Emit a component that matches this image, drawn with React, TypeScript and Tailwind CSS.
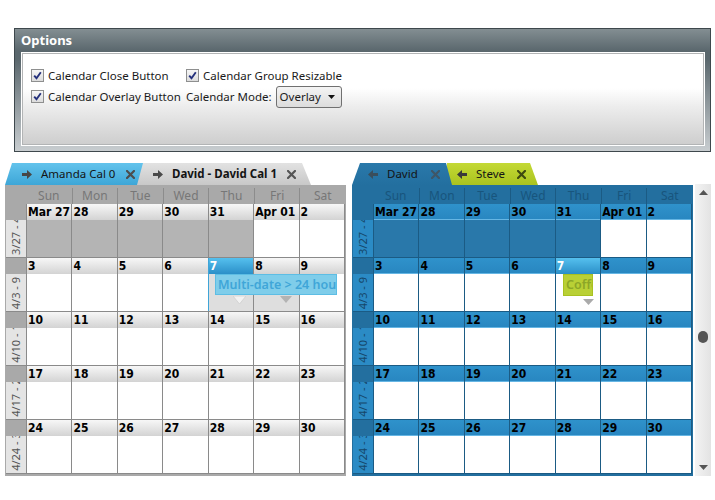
import React from "react";

type Theme = "gray" | "blue";

const DAY_NAMES = ["Sun", "Mon", "Tue", "Wed", "Thu", "Fri", "Sat"];

const WEEKS = [
  { label: "3/27 - 4/2", days: ["Mar 27", "28", "29", "30", "31", "Apr 01", "2"] },
  { label: "4/3 - 9", days: ["3", "4", "5", "6", "7", "8", "9"] },
  { label: "4/10 - 16", days: ["10", "11", "12", "13", "14", "15", "16"] },
  { label: "4/17 - 23", days: ["17", "18", "19", "20", "21", "22", "23"] },
  { label: "4/24 - 30", days: ["24", "25", "26", "27", "28", "29", "30"] },
];

const THEMES = {
  gray: {
    body: "bg-[#a9a9a9]",
    dayName: "text-[#777777] border-[#8c8c8c]",
    line: "border-[#8a8a8a]",
    dateRow: "bg-[linear-gradient(to_bottom,#f7f7f7,#d3d3d3)]",
    past: "bg-[#b4b4b4]",
    labelCell: "bg-[#e4e4e4] text-[#555555]",
  },
  blue: {
    body: "bg-[#236f9f]",
    dayName: "text-[#18557d] border-[#1b5b84]",
    line: "border-[#1b5b84]",
    dateRow: "bg-[linear-gradient(to_bottom,#2f92cb,#2886c0)] shadow-[inset_0_-1px_0_#66b6e4]",
    past: "bg-[#2978aa]",
    labelCell: "bg-[#2b8bc5] text-[#16476a]",
  },
};

const FONT = { fontFamily: '"Noto Sans", "Open Sans", sans-serif' };
const BOLD_FONT = { fontFamily: '"DejaVu Sans Condensed", "Liberation Sans", sans-serif' };

function Arrow({ dir, color }: { dir: "left" | "right"; color: string }) {
  return (
    <svg width="10" height="9" viewBox="0 0 10 9" className={dir === "left" ? "rotate-180" : ""}>
      <polygon points="0,3 5,3 5,0 10,4.5 5,9 5,6 0,6" fill={color} />
    </svg>
  );
}

function Close({ color }: { color: string }) {
  return (
    <svg width="9" height="9" viewBox="0 0 9 9">
      <path d="M1 1 L8 8 M8 1 L1 8" stroke={color} strokeWidth="2.2" strokeLinecap="square" />
    </svg>
  );
}

function Check() {
  return (
    <span className="flex h-[13px] w-[13px] items-center justify-center border border-[#8e8f8f] bg-[linear-gradient(to_bottom,#f6f6f6,#dcdcdc)]">
      <svg width="9" height="9" viewBox="0 0 9 9">
        <path d="M1.2 4.6 L3.5 7.2 L7.8 1.2" stroke="#24307c" strokeWidth="1.9" fill="none" />
      </svg>
    </span>
  );
}

function OptionsPanel() {
  return (
    <div className="ml-[14px] mt-[28px] flex h-[124px] w-[697px] flex-col border border-[#3e484d] bg-[linear-gradient(to_bottom,#838e92_0px,#5a676d_22px,#5a676d_30px,#c8cdd0_100%)]">
      <div className="h-[24px] pl-[6px] text-[13px] font-bold leading-[22px] text-white" style={FONT}>
        Options
      </div>
      <div
        className="mb-[6px] ml-[7px] mr-[6px] flex-1 border border-[#b2b4b5] bg-[linear-gradient(to_bottom,#ffffff_0%,#ffffff_38%,#ededed_58%,#cecece_100%)] pl-[8px] pt-[11px] text-[11.5px] text-[#1a1a1a] shadow-[0_0_0_1px_#ffffff]"
        style={FONT}
      >
        <div className="grid grid-cols-[155px_auto] grid-rows-[21px_21px] items-center">
          <label className="flex items-center gap-[4px]">
            <Check />
            Calendar Close Button
          </label>
          <label className="flex items-center gap-[4px]">
            <Check />
            Calendar Group Resizable
          </label>
          <label className="flex items-center gap-[4px]">
            <Check />
            Calendar Overlay Button
          </label>
          <div className="flex items-center gap-[4px]">
            <span>Calendar Mode:</span>
            <div className="flex h-[22px] w-[66px] items-center justify-between rounded-[3px] border border-[#707070] bg-[linear-gradient(to_bottom,#f4f4f4,#dcdcdc)] pl-[3px] pr-[6px]">
              <span>Overlay</span>
              <svg width="7" height="4" viewBox="0 0 7 4">
                <polygon points="0,0 7,0 3.5,4" fill="#111" />
              </svg>
            </div>
          </div>
        </div>
      </div>
    </div>
  );
}

function Tab({
  label,
  bold,
  className,
  arrow,
  arrowColor,
  closeColor,
  gapClass,
}: {
  label: string;
  bold?: boolean;
  className: string;
  arrow: "left" | "right";
  arrowColor: string;
  closeColor: string;
  gapClass: string;
}) {
  return (
    <div className={`relative flex h-[22px] items-center text-[11.5px] text-[#141414] ${className}`} style={FONT}>
      <Arrow dir={arrow} color={arrowColor} />
      <span className={`ml-[9px] ${bold ? "font-bold" : ""}`}>{label}</span>
      <span className={gapClass}>
        <Close color={closeColor} />
      </span>
    </div>
  );
}

function Calendar({ theme }: { theme: Theme }) {
  const t = THEMES[theme];
  const gray = theme === "gray";
  return (
    <div className="flex w-[341px] flex-col">
      {gray ? (
        <div className="flex h-[22px]">
          <Tab
            label="Amanda Cal 0"
            className="z-0 w-[140px] bg-[linear-gradient(to_bottom,#63c3ec,#3da6d7)] pl-[17px] [clip-path:polygon(7px_0,100%_0,100%_100%,0_100%)]"
            arrow="right"
            arrowColor="#474747"
            closeColor="#4d4d4d"
            gapClass="ml-[11px]"
          />
          <Tab
            label="David - David Cal 1"
            bold
            className="z-10 -ml-[8px] w-[174px] bg-[linear-gradient(to_bottom,#e2e2e2,#c8c8c8)] pl-[16px] [clip-path:polygon(6px_0,calc(100%-9px)_0,100%_100%,0_100%)]"
            arrow="right"
            arrowColor="#4a4a4a"
            closeColor="#555555"
            gapClass="ml-[10px]"
          />
        </div>
      ) : (
        <div className="flex h-[22px]">
          <Tab
            label="David"
            className="z-10 w-[100px] bg-[linear-gradient(to_bottom,#2a79aa,#236f9f)] pl-[16px] [clip-path:polygon(8px_0,calc(100%-6px)_0,100%_100%,0_100%)]"
            arrow="left"
            arrowColor="#3a4e5c"
            closeColor="#3f5666"
            gapClass="ml-[13px]"
          />
          <Tab
            label="Steve"
            className="z-0 -ml-[7px] w-[93px] bg-[linear-gradient(to_bottom,#c4d935,#aac31f)] pl-[12px] [clip-path:polygon(2px_0,calc(100%-8px)_0,100%_100%,0_100%)]"
            arrow="left"
            arrowColor="#3a3a3a"
            closeColor="#3f4a10"
            gapClass="ml-[12px]"
          />
        </div>
      )}

      <div className={`px-[1px] pb-[2px] pt-[2px] ${t.body}`}>
        <div className="ml-[20px] grid h-[17px] w-[319px] grid-cols-7 text-[12px] leading-[16px]" style={FONT}>
          {DAY_NAMES.map((d, i) => (
            <div key={d} className={`my-[1px] text-center ${t.dayName} ${i > 0 ? "border-l" : ""}`}>
              {d}
            </div>
          ))}
        </div>

        {WEEKS.map((w, wi) => (
          <div key={w.label} className={`flex h-[54px] border-b ${t.line}`}>
            <div className="flex w-[20px] flex-col">
              <div className="h-[16px]" />
              <div className={`flex flex-1 flex-col items-center justify-end overflow-hidden ${t.labelCell}`}>
                <span className="shrink-0 rotate-180 whitespace-nowrap pt-[2px] text-[11px] leading-[16px] [writing-mode:vertical-rl]" style={FONT}>
                  {w.label}
                </span>
              </div>
            </div>
            <div className={`relative grid w-[319px] grid-cols-7 border-r ${t.line}`}>
              {w.days.map((d, di) => {
                const today = wi === 1 && di === 4;
                const past = wi === 0 && di < 5;
                const shaded = gray && wi === 1 && (di === 4 || di === 5);
                const blueLine = gray && today;
                return (
                  <div key={d} className={`flex flex-col border-l ${blueLine ? "border-[#3fa4d7]" : t.line}`}>
                    <div
                      className={`h-[16px] pl-[1px] text-[12px] font-bold leading-[17px] ${
                        today ? "bg-[linear-gradient(to_bottom,#55c0ee,#2b8fc8)] text-white" : `${t.dateRow} text-black`
                      }`}
                      style={BOLD_FONT}
                    >
                      {d}
                    </div>
                    <div className={`flex-1 ${past ? t.past : shaded ? "bg-[#dedede]" : "bg-white"}`} />
                  </div>
                );
              })}
              {wi === 1 && gray && (
                <>
                  <div
                    className="absolute left-[189px] top-[16px] h-[21px] w-[122px] overflow-hidden whitespace-nowrap border border-[#5dbde4] bg-[#7fcdea] pl-[2px] text-[12.5px] font-semibold leading-[19px] text-[#3fa6d8]"
                    style={FONT}
                  >
                    Multi-date &gt; 24 hours
                  </div>
                  <svg className="absolute left-[207px] top-[38px]" width="13" height="8" viewBox="0 0 13 8">
                    <polygon points="0,0 13,0 6.5,8" fill="#f2f2f2" stroke="#cfcfcf" strokeWidth="0.8" />
                  </svg>
                  <svg className="absolute left-[254px] top-[38px]" width="12" height="7" viewBox="0 0 12 7">
                    <polygon points="0,0 12,0 6,7" fill="#b3b3b3" />
                  </svg>
                </>
              )}
              {wi === 1 && !gray && (
                <>
                  <div
                    className="absolute left-[190px] top-[16px] h-[22px] w-[30px] overflow-hidden whitespace-nowrap border border-[#a9c120] bg-[#b9d035] pl-[2px] text-[12.5px] font-semibold leading-[20px] text-[#8ca627]"
                    style={FONT}
                  >
                    Coffee
                  </div>
                  <svg className="absolute left-[210px] top-[41px]" width="11" height="6" viewBox="0 0 11 6">
                    <polygon points="0,0 11,0 5.5,6" fill="#aaaaaa" />
                  </svg>
                </>
              )}
            </div>
          </div>
        ))}
      </div>
    </div>
  );
}

function ScrollBar() {
  return (
    <div className="ml-[2px] mt-[21px] flex h-[292px] w-[16px] flex-col items-center bg-[linear-gradient(to_right,#f3f3f3,#e3e3e3)] py-[6px]">
      <svg width="9" height="5" viewBox="0 0 9 5">
        <polygon points="4.5,0 9,5 0,5" fill="#555555" />
      </svg>
      <div className="mt-[136px] h-[12px] w-[10px] rounded-full bg-[#555555]" />
      <div className="flex-1" />
      <svg width="9" height="5" viewBox="0 0 9 5">
        <polygon points="0,0 9,0 4.5,5" fill="#555555" />
      </svg>
    </div>
  );
}

export default function App() {
  return (
    <div className="relative h-[500px] w-[715px] overflow-hidden bg-white">
      <OptionsPanel />
      <div className="mt-[11px] flex items-start pl-[5px]">
        <Calendar theme="gray" />
        <div className="ml-[6px]">
          <Calendar theme="blue" />
        </div>
        <ScrollBar />
      </div>
    </div>
  );
}
